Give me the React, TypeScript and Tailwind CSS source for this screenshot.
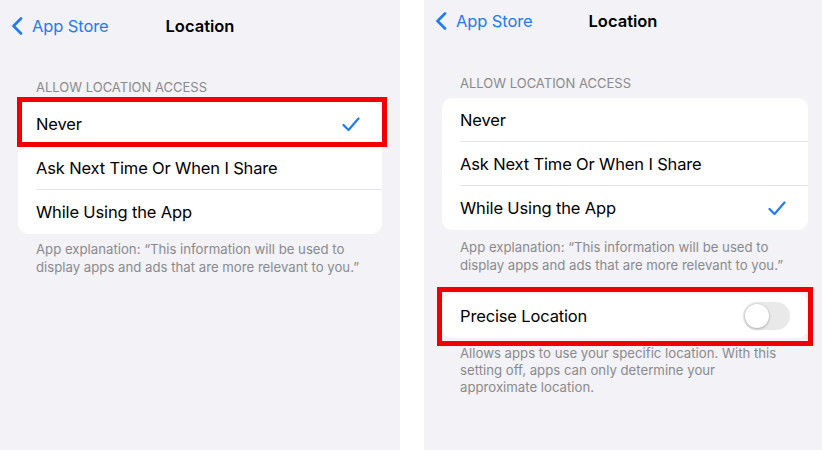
import React from "react";

const font = { fontFamily: "Inter, 'Noto Sans', sans-serif" };

function Chevron() {
  return (
    <svg width="12" height="18" viewBox="0 0 12 18" fill="none">
      <path d="M10 1.5 L2.5 9 L10 16.5" stroke="#1f7cf0" strokeWidth="2.6" strokeLinecap="round" strokeLinejoin="round" />
    </svg>
  );
}

function Check() {
  return (
    <svg width="18" height="15" viewBox="0 0 18 15" fill="none">
      <path d="M1.5 8 L6.5 13 L16.5 1.5" stroke="#1f7cf0" strokeWidth="2.2" strokeLinecap="round" strokeLinejoin="round" />
    </svg>
  );
}

function Header({ h }: { h: string }) {
  return (
    <div className={`relative flex items-center ${h}`}>
      <div className="flex items-center gap-[9px] pl-[11px]">
        <Chevron />
        <span className="text-[16.5px] text-[#1f7cf0] tracking-[-0.1px]">App Store</span>
      </div>
      <div className="absolute inset-x-0 text-center text-[16.5px] font-semibold text-black pointer-events-none">Location</div>
    </div>
  );
}

function Row({ label, checked, last, pr }: { label: string; checked?: boolean; last?: boolean; pr: string }) {
  return (
    <div className={`flex h-[44px] items-center pl-[18px]`}>
      <div className={`flex h-full flex-1 items-center pt-[1px] ${pr} ${last ? "" : "border-b border-[#e3e3e8]"}`}>
        <span className="flex-1 text-[16.5px] text-black tracking-[-0.15px]">{label}</span>
        {checked && <Check />}
      </div>
    </div>
  );
}

export default function App() {
  return (
    <div className="flex h-[450px] w-[822px] overflow-hidden bg-white" style={font}>
      {/* Left panel */}
      <div className="relative w-[400px] bg-[#f2f2f7]">
        <Header h="h-[52px]" />
        <div className="pl-[36px] pt-[27px] pb-[7px] text-[13px] leading-[16px] text-[#8a8a8e] uppercase">Allow Location Access</div>
        <div className="ml-[18px] w-[364px] rounded-[10px] bg-white overflow-hidden">
          <Row label="Never" checked pr="pr-[22px]" />
          <Row label="Ask Next Time Or When I Share" pr="pr-[22px]" />
          <Row label="While Using the App" last pr="pr-[22px]" />
        </div>
        <div className="mt-[6px] pl-[36px] text-[13.2px] leading-[18px] text-[#8a8a8e]">
          App explanation: “This information will be used to
          <br />
          display apps and ads that are more relevant to you.”
        </div>
        <div className="absolute left-[17px] top-[97px] h-[50px] w-[370px] border-[5px] border-[#f00000]" />
      </div>

      {/* Gap */}
      <div className="w-[24px] bg-white" />

      {/* Right panel */}
      <div className="relative flex-1 bg-[#f2f2f7]">
        <Header h="h-[42px]" />
        <div className="pl-[36px] pt-[33px] pb-[7px] text-[13px] leading-[16px] text-[#8a8a8e] uppercase">Allow Location Access</div>
        <div className="ml-[18px] w-[366px] rounded-[10px] bg-white overflow-hidden">
          <Row label="Never" pr="pr-[22px]" />
          <Row label="Ask Next Time Or When I Share" pr="pr-[22px]" />
          <Row label="While Using the App" checked last pr="pr-[22px]" />
        </div>
        <div className="mt-[8px] pl-[36px] text-[13.2px] leading-[18px] text-[#8a8a8e]">
          App explanation: “This information will be used to
          <br />
          display apps and ads that are more relevant to you.”
        </div>
        <div className="mt-[20px] ml-[18px] w-[366px] rounded-[10px] bg-white">
          <div className="flex h-[44px] items-center pl-[18px] pr-[18px]">
            <span className="flex-1 pt-[1px] text-[16.5px] text-black tracking-[-0.15px]">Precise Location</span>
            <div className="flex h-[28px] w-[47px] items-center rounded-full bg-[#e9e9ea] p-[2px]">
              <div className="h-[24px] w-[24px] rounded-full bg-white shadow-[0_1px_3px_rgba(0,0,0,0.25),0_0_0_0.5px_rgba(0,0,0,0.06)]" />
            </div>
          </div>
        </div>
        <div className="mt-[7px] pl-[36px] text-[13.2px] leading-[17px] text-[#8a8a8e]">
          Allows apps to use your specific location. With this
          <br />
          setting off, apps can only determine your
          <br />
          approximate location.
        </div>
        <div className="absolute left-[13px] top-[287px] h-[59px] w-[376px] border-[5px] border-[#f00000]" />
      </div>
    </div>
  );
}
